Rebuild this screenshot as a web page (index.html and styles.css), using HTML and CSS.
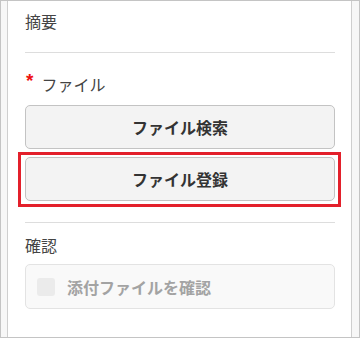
FILE: index.html
```html
<!DOCTYPE html>
<html lang="ja">
<head>
<meta charset="utf-8">
<link rel="stylesheet" href="styles.css">
</head>
<body>
<div class="frame">
  <div class="panel">
    <div class="label first">摘要</div>
    <div class="divider"></div>
    <div class="label req"><span class="star">*</span>ファイル</div>
    <div class="buttons">
      <button class="btn">ファイル検索</button>
      <div class="highlight-wrap">
        <button class="btn">ファイル登録</button>
        <div class="highlight"></div>
      </div>
    </div>
    <div class="divider second"></div>
    <div class="label confirm">確認</div>
    <div class="checkrow">
      <span class="box"></span>
      <span class="checktext">添付ファイルを確認</span>
    </div>
  </div>
</div>
</body>
</html>
```

FILE: styles.css
```css
html, body {
  margin: 0;
  padding: 0;
  background: #ffffff;
}
body {
  font-family: "Noto Sans CJK JP", "Noto Sans", sans-serif;
  font-size: 16px;
  color: #444444;
}
.frame {
  width: 360px;
  height: 338px;
  box-sizing: border-box;
  border: 1px solid #c4c4c4;
  background: #f7f7f7;
  padding-left: 6px;
}
.panel {
  width: 345px;
  height: 100%;
  box-sizing: border-box;
  background: #ffffff;
  border-left: 1px solid #cfcfcf;
  border-right: 1px solid #cfcfcf;
  padding: 8px 16px 0 17px;
}
.label {
  line-height: 24px;
  height: 24px;
  color: #444444;
}
.divider {
  height: 1px;
  background: #dddddd;
  margin-top: 19px;
}
.req {
  margin-top: 19px;
  display: flex;
  align-items: flex-start;
}
.star {
  font-family: "Liberation Sans", Arial, sans-serif;
  font-weight: bold;
  font-size: 19px;
  color: #ee1111;
  line-height: 16px;
  margin-top: 1px;
  margin-left: 1px;
  margin-right: 8px;
}
.buttons {
  margin-top: 9px;
  display: flex;
  flex-direction: column;
  gap: 8px;
}
.btn {
  display: block;
  width: 100%;
  height: 44px;
  box-sizing: border-box;
  border: 1px solid #c3c3c3;
  border-radius: 5px;
  background: #f3f3f3;
  font-family: "Noto Sans CJK JP", "Noto Sans", sans-serif;
  font-size: 16px;
  font-weight: bold;
  color: #333333;
  padding: 0;
}
.highlight-wrap {
  position: relative;
}
.highlight {
  position: absolute;
  top: -5px;
  bottom: -6px;
  left: -7px;
  right: -6px;
  border: 3px solid #e3202b;
  pointer-events: none;
}
.divider.second {
  margin-top: 21px;
}
.confirm {
  margin-top: 10px;
}
.checkrow {
  margin-top: 7px;
  height: 45px;
  box-sizing: border-box;
  border: 1px solid #e3e3e3;
  border-radius: 5px;
  background: #f9f9f9;
  display: flex;
  align-items: center;
  padding-left: 11px;
  gap: 12px;
}
.box {
  width: 18px;
  height: 18px;
  border-radius: 3px;
  background: #ebebeb;
  flex: none;
}
.checktext {
  font-weight: bold;
  color: #a3a3a3;
  font-size: 16px;
}
```
